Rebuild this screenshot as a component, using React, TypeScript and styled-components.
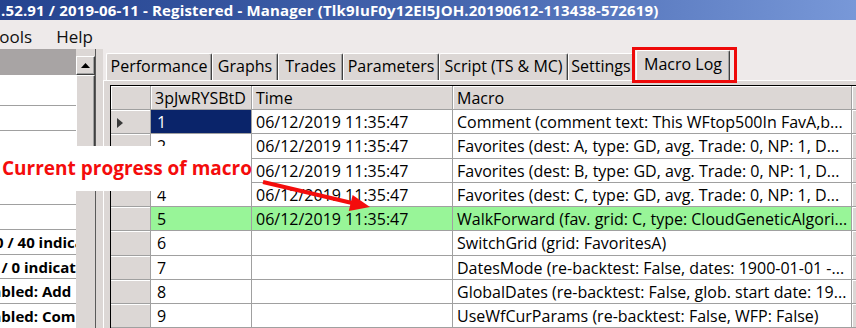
import styled, { createGlobalStyle, css } from 'styled-components'

const GlobalStyle = createGlobalStyle`
  html, body {
    margin: 0;
    padding: 0;
  }
  body {
    width: 856px;
    height: 328px;
    overflow: hidden;
    background: #eeeaea;
    font-family: 'Open Sans', 'Noto Sans', sans-serif;
  }
`

type Tone = 'plain' | 'head' | 'rowhead' | 'selected' | 'progress'

const macroRows = [
  { id: '1', time: '06/12/2019 11:35:47', macro: 'Comment (comment text: This WFtop500In FavA,b...' },
  { id: '2', time: '06/12/2019 11:35:47', macro: 'Favorites (dest: A, type: GD, avg. Trade: 0, NP: 1, D...' },
  { id: '3', time: '06/12/2019 11:35:47', macro: 'Favorites (dest: B, type: GD, avg. Trade: 0, NP: 1, D...' },
  { id: '4', time: '06/12/2019 11:35:47', macro: 'Favorites (dest: C, type: GD, avg. Trade: 0, NP: 1, D...' },
  { id: '5', time: '06/12/2019 11:35:47', macro: 'WalkForward (fav. grid: C, type: CloudGeneticAlgori...' },
  { id: '6', time: '', macro: 'SwitchGrid (grid: FavoritesA)' },
  { id: '7', time: '', macro: 'DatesMode (re-backtest: False, dates: 1900-01-01 -...' },
  { id: '8', time: '', macro: 'GlobalDates (re-backtest: False, glob. start date: 19...' },
  { id: '9', time: '', macro: 'UseWfCurParams (re-backtest: False, WFP: False)' },
]

const tabs = [
  { label: 'Performance', w: 106 },
  { label: 'Graphs', w: 66 },
  { label: 'Trades', w: 65 },
  { label: 'Parameters', w: 96 },
  { label: 'Script (TS & MC)', w: 129 },
  { label: 'Settings', w: 66 },
  { label: 'Macro Log', w: 94, active: true },
]

const sideRows = [
  { text: '', h: 31 },
  { text: '' }, { text: '' }, { text: '' }, { text: '' }, { text: '' },
  { text: '0 / 40 indicators', shift: -5 },
  { text: '0 / 0 indicators', shift: -11 },
  { text: 'Enabled: Add', shift: -26 },
  { text: 'Enabled: Compile', shift: -26 },
]

export default function App() {
  const selected = 0
  const progress = 4
  return (
    <Window>
      <GlobalStyle />
      <TitleBar>.52.91 / 2019-06-11 - Registered - Manager (Tlk9IuF0y12EI5JOH.20190612-113438-572619)</TitleBar>
      <MenuBar>
        <MenuItem>Tools</MenuItem>
        <MenuItem>Help</MenuItem>
      </MenuBar>
      <Body>
        <SidePanel>
          <SideHeader />
          {sideRows.map((r, i) => (
            <SideRow key={i} $h={r.h} $shift={r.shift}>{r.text}</SideRow>
          ))}
        </SidePanel>
        <ScrollBar>
          <ScrollButton>
            <svg width="9" height="5" viewBox="0 0 9 5"><polygon points="4.5,0 9,5 0,5" fill="#000" /></svg>
          </ScrollButton>
          <ScrollThumb />
        </ScrollBar>
        <Splitter />
        <TabArea>
          <TabStrip>
            {tabs.map(t => (
              <Tab key={t.label} $w={t.w} $active={t.active}>{t.label}</Tab>
            ))}
          </TabStrip>
          <TabPanel>
            <Grid>
              <GridRow $head>
                <Cell $tone="head" />
                <Cell $tone="head">3pJwRYSBtD</Cell>
                <Cell $tone="head">Time</Cell>
                <Cell $tone="head">Macro</Cell>
                <Cell $tone="head" />
              </GridRow>
              {macroRows.map((r, i) => {
                const tone: Tone = i === progress ? 'progress' : 'plain'
                return (
                  <GridRow key={r.id}>
                    <Cell $tone="rowhead">
                      {i === selected && (
                        <svg width="6" height="10" viewBox="0 0 6 10"><polygon points="0,0 6,5 0,10" fill="#3a3a3a" /></svg>
                      )}
                    </Cell>
                    <Cell $tone={i === selected ? 'selected' : tone} $pad={6}>{r.id}</Cell>
                    <Cell $tone={tone}>{r.time}</Cell>
                    <Cell $tone={tone}>{r.macro}</Cell>
                    <Cell $tone="head" />
                  </GridRow>
                )
              })}
            </Grid>
          </TabPanel>
        </TabArea>
      </Body>
      <Callout>Current progress of macro</Callout>
      <Arrow width="856" height="328" viewBox="0 0 856 328">
        <line x1="263" y1="182" x2="352" y2="203" stroke="#f40c0c" strokeWidth="4" />
        <polygon points="370,207 352.6,195 348.8,211" fill="#f40c0c" />
      </Arrow>
    </Window>
  )
}

const Window = styled.div`
  position: relative;
  width: 856px;
  height: 328px;
  overflow: hidden;
  display: flex;
  flex-direction: column;
`

const TitleBar = styled.div`
  flex: none;
  height: 20px;
  padding-left: 1px;
  background: linear-gradient(to right, #24438f, #4767b0 55%, #7898d8);
  color: #fff;
  font-weight: 700;
  font-size: 15px;
  letter-spacing: 0.15px;
  line-height: 20px;
  white-space: nowrap;
`

const MenuBar = styled.div`
  flex: none;
  height: 29px;
  display: flex;
  align-items: center;
  background: #eeeaea;
  overflow: hidden;
  padding-top: 4px;
  box-sizing: border-box;
`

const MenuItem = styled.span`
  font-size: 17px;
  padding: 0 12px;
  color: #111;
  &:first-child {
    margin-left: -22px;
  }
`

const Body = styled.div`
  flex: 1;
  min-height: 0;
  display: flex;
  background: #dcd7d5;
`

const SidePanel = styled.div`
  flex: none;
  width: 76px;
  background: #fff;
  overflow: hidden;
`

const SideHeader = styled.div`
  height: 26px;
  background: #a8a4a4;
`

const SideRow = styled.div<{ $h?: number; $shift?: number }>`
  height: ${p => p.$h ?? 24.75}px;
  box-sizing: border-box;
  border-bottom: 1px solid #a0a0a0;
  padding-top: 2px;
  font-weight: 700;
  font-size: 15px;
  line-height: 21px;
  color: #000;
  white-space: nowrap;
  text-indent: ${p => p.$shift ?? 0}px;
`

const raised = css`
  box-sizing: border-box;
  background: #dcd7d5;
  border: 1px solid;
  border-color: #fff #404040 #404040 #fff;
  box-shadow: inset -1px -1px #a0a0a0;
`

const ScrollBar = styled.div`
  flex: none;
  width: 20px;
  box-sizing: border-box;
  padding-top: 7px;
  border-right: 1px solid #5a5a5a;
  display: flex;
  flex-direction: column;
`

const ScrollButton = styled.div`
  ${raised};
  height: 19px;
  display: flex;
  align-items: center;
  justify-content: center;
`

const ScrollThumb = styled.div`
  ${raised};
  height: 96px;
`

const Splitter = styled.div`
  flex: none;
  width: 7px;
`

const TabArea = styled.div`
  flex: 1;
  min-width: 0;
  display: flex;
  flex-direction: column;
`

const TabStrip = styled.div`
  flex: none;
  height: 31px;
  display: flex;
  align-items: flex-end;
  padding-left: 3px;
  background: #eeeaea;
`

const Tab = styled.div<{ $w: number; $active?: boolean }>`
  position: relative;
  flex: none;
  width: ${p => p.$w}px;
  height: 27px;
  box-sizing: border-box;
  background: #dcd7d5;
  border-top: 1px solid #fff;
  border-left: 1px solid #fff;
  border-right: 1px solid #404040;
  box-shadow: inset -1px 0 #a0a0a0;
  border-radius: 2px 2px 0 0;
  font-size: 16px;
  line-height: 24px;
  text-align: center;
  color: #000;
  white-space: nowrap;
  ${p =>
    p.$active &&
    css`
      height: 31px;
      margin-left: 2px;
      margin-bottom: -1px;
      z-index: 1;
      line-height: 26px;
      &::after {
        content: '';
        position: absolute;
        top: -4px;
        left: -5px;
        right: -8px;
        bottom: -2px;
        border: 3px solid #ee0a0a;
      }
    `}
`

const TabPanel = styled.div`
  flex: 1;
  min-height: 0;
  border-top: 1px solid #fff;
  border-left: 1px solid #fff;
  padding: 4px 0 0 6px;
  overflow: hidden;
`

const Grid = styled.div`
  border-top: 1px solid #000;
  border-left: 1px solid #000;
  background: #dcd7d5;
`

const GridRow = styled.div<{ $head?: boolean }>`
  display: grid;
  grid-template-columns: 40px 101px 201px 399px 1fr;
  height: ${p => (p.$head ? 24 : 24.25)}px;
`

const tones: Record<Tone, ReturnType<typeof css>> = {
  plain: css`
    background: #fff;
    color: #000;
  `,
  head: css`
    background: #dcd7d5;
    color: #000;
    box-shadow: inset 1px 1px #fff;
  `,
  rowhead: css`
    background: #dcd7d5;
    box-shadow: inset 0 1px #fff;
    display: flex;
    align-items: center;
    padding-left: 6px;
  `,
  selected: css`
    background: #0a246a;
    color: #fff;
  `,
  progress: css`
    background: #98f598;
    color: #000;
  `,
}

const Cell = styled.div<{ $tone: Tone; $pad?: number }>`
  box-sizing: border-box;
  border-right: 1px solid #a0a0a0;
  border-bottom: 1px solid #a0a0a0;
  padding: 2px 0 0 ${p => p.$pad ?? 4}px;
  font-size: 16px;
  line-height: 21px;
  white-space: nowrap;
  overflow: hidden;
  ${p => tones[p.$tone]};
`

const Callout = styled.div`
  position: absolute;
  left: 0;
  top: 146px;
  width: 251px;
  height: 45px;
  box-sizing: border-box;
  padding: 9px 0 0 2px;
  background: #fff;
  color: #f40c0c;
  font-weight: 700;
  font-size: 19px;
  line-height: 26px;
  white-space: nowrap;
`

const Arrow = styled.svg`
  position: absolute;
  left: 0;
  top: 0;
  pointer-events: none;
`
